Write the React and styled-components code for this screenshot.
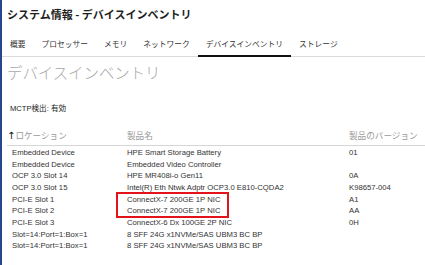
import React from "react";
import styled, { createGlobalStyle } from "styled-components";

const GlobalStyle = createGlobalStyle`
  html, body {
    margin: 0;
    padding: 0;
    background: #fff;
  }
  body {
    font-family: "Liberation Sans", "Noto Sans CJK JP", sans-serif;
    color: #333;
  }
`;

const Frame = styled.div`
  position: relative;
  width: 425px;
  height: 265px;
  box-sizing: border-box;
  border-left: 2px solid #24478f;
  overflow: hidden;

  &::before {
    content: "";
    position: absolute;
    left: -2px;
    top: 50px;
    width: 2px;
    height: 15px;
    background: #01a982;
  }
`;

const Title = styled.h1`
  margin: 0;
  padding: 6px 0 0 5px;
  font-family: "Noto Sans CJK JP", sans-serif;
  font-size: 11px;
  line-height: 16px;
  font-weight: 700;
  color: #1f1f1f;
`;

const TabBar = styled.div`
  display: flex;
  margin-top: 16px;
  border-bottom: 1px solid #dcdcdc;
`;

const Tab = styled.div`
  padding: 0 8px 5px;
  font-family: "Noto Sans CJK JP", sans-serif;
  font-size: 7.75px;
  line-height: 12px;
  color: #333;
  border-bottom: 2px solid ${(p) => (p.$active ? "#111" : "transparent")};
  margin-bottom: -1px;
  white-space: nowrap;
`;

const PageHeading = styled.h2`
  margin: 5px 0 0 5px;
  font-family: "Noto Sans CJK JP", sans-serif;
  font-size: 15.4px;
  line-height: 20px;
  font-weight: 300;
  color: #a8a8a8;
`;

const Status = styled.div`
  margin: 21px 0 0 8px;
  font-family: "Liberation Sans", "Noto Sans CJK JP", sans-serif;
  font-size: 7.6px;
  line-height: 12px;
  color: #222;
`;

const Table = styled.div`
  position: relative;
  margin: 14px 0 0 5px;
`;

const HeaderRow = styled.div`
  display: grid;
  grid-template-columns: 120px 222px 1fr;
  padding-bottom: 3px;
  border-bottom: 1px solid #d6d6d6;
  font-family: "Noto Sans CJK JP", sans-serif;
  font-size: 8.6px;
  line-height: 12px;
  color: #9a9a9a;
`;

const SortArrow = styled.span`
  font-family: "DejaVu Sans", sans-serif;
  font-size: 10px;
  color: #111;
`;

const Body = styled.div`
  padding-top: 1px;
`;

const Row = styled.div`
  display: grid;
  grid-template-columns: 120px 222px 1fr;
  font-size: 7.7px;
  line-height: 11.65px;
  color: #333;
  white-space: nowrap;

  & > span:first-child {
    padding-left: 5px;
  }
`;

const Highlight = styled.div`
  position: absolute;
  left: 109px;
  top: 63px;
  width: 109px;
  height: 22px;
  border: 2px solid #e3121b;
  pointer-events: none;
`;

const tabs = ["概要", "プロセッサー", "メモリ", "ネットワーク", "デバイスインベントリ", "ストレージ"];

const rows = [
  ["Embedded Device", "HPE Smart Storage Battery", "01"],
  ["Embedded Device", "Embedded Video Controller", ""],
  ["OCP 3.0 Slot 14", "HPE MR408i-o Gen11", "0A"],
  ["OCP 3.0 Slot 15", "Intel(R) Eth Ntwk Adptr OCP3.0 E810-CQDA2", "K98657-004"],
  ["PCI-E Slot 1", "ConnectX-7 200GE 1P NIC", "A1"],
  ["PCI-E Slot 2", "ConnectX-7 200GE 1P NIC", "AA"],
  ["PCI-E Slot 3", "ConnectX-6 Dx 100GE 2P NIC", "0H"],
  ["Slot=14:Port=1:Box=1", "8 SFF 24G x1NVMe/SAS UBM3 BC BP", ""],
  ["Slot=14:Port=1:Box=1", "8 SFF 24G x1NVMe/SAS UBM3 BC BP", ""],
];

export default function App() {
  return (
    <>
      <GlobalStyle />
      <Frame>
        <Title>システム情報 - デバイスインベントリ</Title>
        <TabBar>
          {tabs.map((t) => (
            <Tab key={t} $active={t === "デバイスインベントリ"}>
              {t}
            </Tab>
          ))}
        </TabBar>
        <PageHeading>デバイスインベントリ</PageHeading>
        <Status>MCTP検出: 有効</Status>
        <Table>
          <HeaderRow>
            <span>
              <SortArrow>↑</SortArrow>ロケーション
            </span>
            <span>製品名</span>
            <span>製品のバージョン</span>
          </HeaderRow>
          <Body>
            {rows.map((r, i) => (
              <Row key={i}>
                <span>{r[0]}</span>
                <span>{r[1]}</span>
                <span>{r[2]}</span>
              </Row>
            ))}
          </Body>
          <Highlight />
        </Table>
      </Frame>
    </>
  );
}
